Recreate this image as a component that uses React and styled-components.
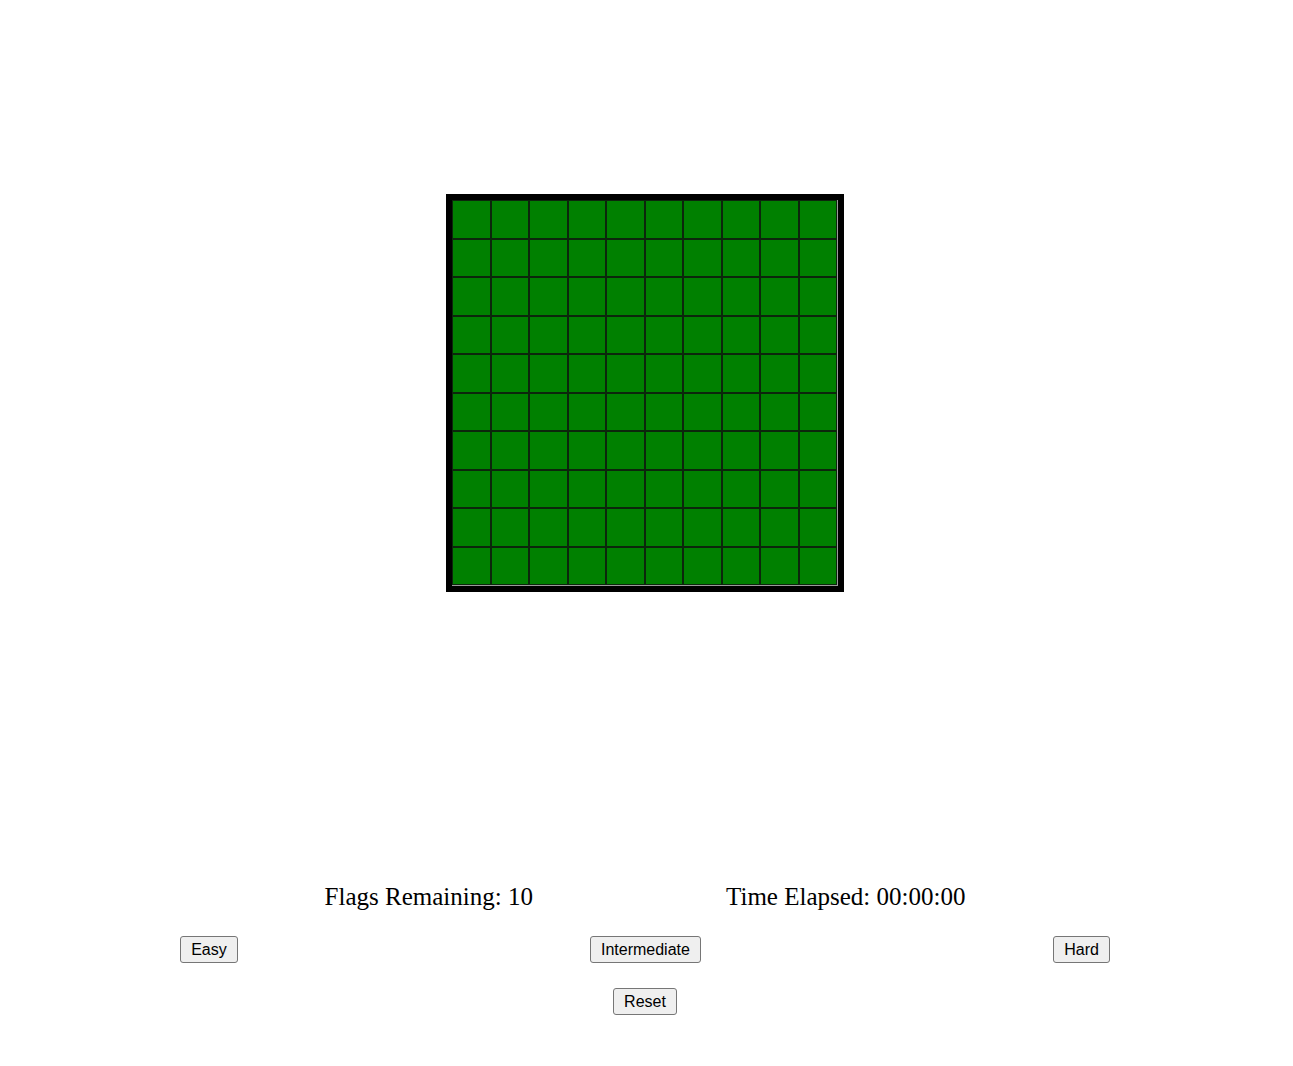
import React, { useState } from 'react'
import styled, { createGlobalStyle } from 'styled-components'

const SIZE = 10

const GlobalStyle = createGlobalStyle`
    html, body {
        margin: 0;
        padding: 0;
        background: #fff;
    }

    body {
        font-family: "Liberation Serif", "Times New Roman", serif;
        color: #000;
    }
`

const Page = styled.div`
    width: 1290px;
    display: flex;
    flex-direction: column;
    align-items: center;
`

const BoardArea = styled.div`
    height: 786px;
    width: 100%;
    display: flex;
    align-items: center;
    justify-content: center;
`

const Board = styled.div`
    border: 6px solid #000;
    background: #000;
`

const Grid = styled.div`
    width: 385px;
    height: 385px;
    display: grid;
    grid-template-columns: repeat(${SIZE}, 1fr);
    grid-template-rows: repeat(${SIZE}, 1fr);
    border-right: 1px solid #9a9a9a;
    border-bottom: 1px solid #9a9a9a;
`

const Cell = styled.div`
    background: #008000;
    border: 1px solid #0c260c;
    cursor: pointer;
`

const Stats = styled.div`
    margin-top: 97px;
    width: 834px;
    display: flex;
    justify-content: space-around;
    font-size: 25px;
`

const Controls = styled.div`
    margin-top: 25px;
    width: 100%;
    padding: 0 4px;
    box-sizing: border-box;
    display: flex;
    justify-content: space-around;
`

const Button = styled.button`
    font-family: "Liberation Sans", Arial, sans-serif;
    font-size: 16px;
    height: 27px;
    padding: 0 10px;
    color: #000;
    background: #efefef;
    border: 1px solid #767676;
    border-radius: 3px;
    cursor: pointer;
`

const ResetRow = styled.div`
    margin-top: 25px;
    display: flex;
    justify-content: center;
`

const App = () => {
    const [flags] = useState(10)
    const cells = Array.from({ length: SIZE * SIZE }, (_, i) => i)

    return (
        <Page>
            <GlobalStyle />
            <BoardArea>
                <Board>
                    <Grid>
                        {cells.map(i => <Cell key={i} />)}
                    </Grid>
                </Board>
            </BoardArea>

            <Stats>
                <span>Flags Remaining: {flags}</span>
                <span>Time Elapsed: 00:00:00</span>
            </Stats>

            <Controls>
                <Button>Easy</Button>
                <Button>Intermediate</Button>
                <Button>Hard</Button>
            </Controls>

            <ResetRow>
                <Button>Reset</Button>
            </ResetRow>
        </Page>
    )
}

export default App
